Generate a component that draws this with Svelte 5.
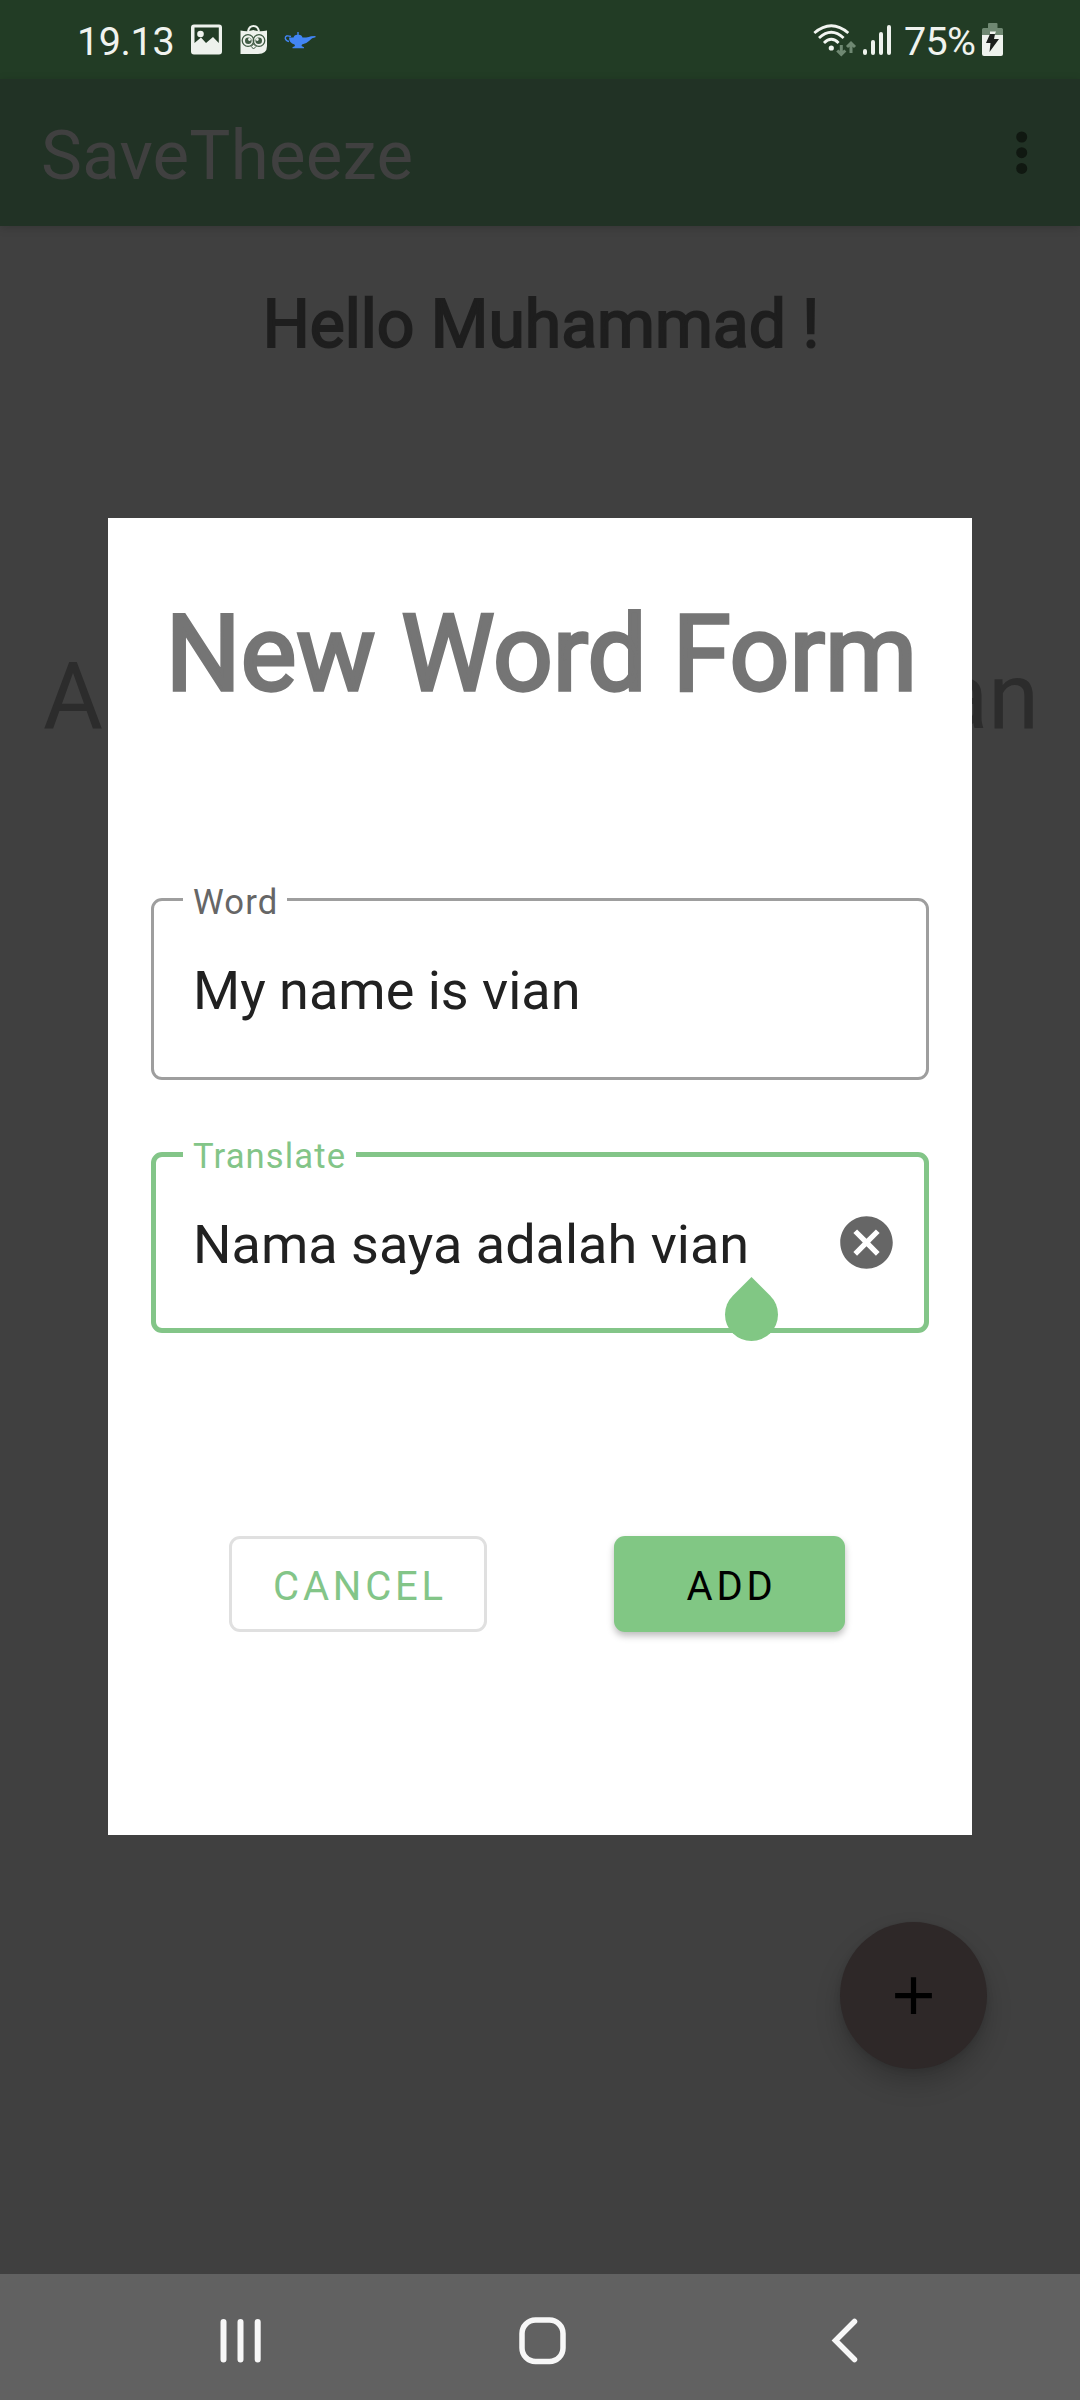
<script>
  const bars = [6, 15, 23, 30];
</script>

<div class="screen">
  <header class="status">
    <div class="left">
      <span class="time">19.13</span>
      <svg class="photo" width="32" height="32" viewBox="0 0 32 32">
        <path fill="#eef2ed" fill-rule="evenodd" d="M3 0.500H28Q31 .5 31 3.500V27.500Q31 30.500 28 30.500H3Q0 30.500 0 27.500V3.500Q0 .5 3 .500ZM3.500 3.500V19L10 13.500L15 19L22 13L27.800 19V3.500Z" />
        <circle cx="9.500" cy="10" r="3.300" fill="#eef2ed" />
      </svg>
      <svg class="bag" width="28" height="32" viewBox="0 0 28 32">
        <path d="M8 7.500Q9 2 13.500 2Q18 2 19 7.500" fill="none" stroke="#eef2ed" stroke-width="2" />
        <path d="M0.500 6.500Q8 8 13.500 6Q19 8 27 6.500V22Q27 30 18 30H.5Z" fill="#eef2ed" />
        <g fill="none" stroke="#3f5a43" stroke-width="1.300">
          <circle cx="8" cy="16.500" r="5.800" /><circle cx="19" cy="16.500" r="5.800" />
        </g>
        <circle cx="8.300" cy="16.700" r="3.300" fill="#3f5a43" /><circle cx="18.700" cy="16.700" r="3.300" fill="#3f5a43" />
        <circle cx="9.500" cy="15.500" r="1.400" fill="#eef2ed" /><circle cx="17.300" cy="15.500" r="1.400" fill="#eef2ed" />
        <path d="M13.500 20L16 22.500L13.500 25L11.300 22.500Z" fill="#eef2ed" stroke="#3f5a43" stroke-width="1" />
      </svg>
      <svg class="lamp" width="32" height="18" viewBox="0 0 32 18">
        <path d="M7 5.500Q1 3.500 1.300 7.500Q2 10 5 10.500" fill="none" stroke="#4285f4" stroke-width="1.400" />
        <path d="M5 6.500H9.500Q10 4 13.300 3.700V1H14.700V3.700Q18 4 18.500 6.500H22Q25 6 27 5.300L31.500 5V6.200Q28 6.500 25 10Q22 13 18 13.500L17.500 15L20 16.200V17.300H8.500V16.200L11 15L10.500 13.500Q5 12 5 6.500Z" fill="#4285f4" />
      </svg>
    </div>
    <div class="right">
      <svg class="wifi" width="44" height="36" viewBox="0 0 44 36">
        <g fill="none" stroke="#f2f5f1" stroke-width="2.800">
          <path d="M1.300 10Q18.300 -4.500 35.300 10" /><path d="M6 15Q18.300 3.500 30.600 15" /><path d="M11 20Q18.300 12.500 25.600 20" />
        </g>
        <circle cx="18.300" cy="25" r="2.600" fill="#f2f5f1" />
        <g fill="none" stroke="#6f8872" stroke-width="3">
          <path d="M28.300 22V31M24.300 27.500L28.300 31.500L32.300 27.500" /><path d="M38 30V20.500M34 24L38 20L42 24" />
        </g>
      </svg>
      <div class="signal">
        {#each bars as h}<i style:height="{h}px"></i>{/each}
      </div>
      <span class="pct">75%</span>
      <svg class="battery" width="22" height="34" viewBox="0 0 22 34">
        <path d="M6 1Q6 0 7 0H14.500Q15.500 0 15.500 1V5H19.500Q21 5 21 6.500V12H0V6.500Q0 5 1.500 5H6Z" fill="#6f8872" />
        <path d="M0 12H21V31Q21 33 19 33H2Q0 33 0 31Z" fill="#eef2ed" />
        <path d="M8 8.500H14L12.500 12H8Z" fill="#eef2ed" />
        <path d="M8 11H13L12 16H17L7.500 29L8.500 20H4Z" fill="#1b1f1c" />
      </svg>
    </div>
  </header>

  <div class="appbar">
    <span class="brand">SaveTheeze</span>
    <svg width="12" height="44" viewBox="0 0 12 44" fill="#101811">
      <circle cx="5.700" cy="6" r="5.500" /><circle cx="5.700" cy="21.700" r="5.500" /><circle cx="5.700" cy="37.400" r="5.500" />
    </svg>
  </div>

  <main>
    <h2>Hello Muhammad !</h2>
    <div class="phrase"><span>A</span><span>an</span></div>
  </main>

  <nav>
    <svg width="1080" height="126" viewBox="0 0 1080 126" fill="none" stroke="#f7f7f7">
      <path d="M223.500 48V85.500M240.500 48V85.500M257.700 48V85.500" stroke-width="6" stroke-linecap="round" />
      <rect x="522" y="46" width="41" height="41.500" rx="13.500" stroke-width="5.500" />
      <path d="M854.500 47.500L835.500 66.500L854.500 85.500" stroke-width="5.500" stroke-linecap="round" />
    </svg>
  </nav>

  <button class="fab" aria-label="Add word">
    <svg width="63" height="63" viewBox="0 0 24 24"><path d="M19 13h-6v6h-2v-6H5v-2h6V5h2v6h6v2z" /></svg>
  </button>

  <section class="dialog">
    <h1>New Word Form</h1>
    <fieldset class="word">
      <legend><span>Word</span></legend>
      <span class="value">My name is vian</span>
    </fieldset>
    <fieldset class="translate">
      <legend><span>Translate</span></legend>
      <span class="value">Nama saya adalah vian</span>
      <svg class="clear" width="63" height="63" viewBox="0 0 24 24" fill="#666"><path d="M12 2C6.470 2 2 6.470 2 12s4.470 10 10 10 10-4.470 10-10S17.530 2 12 2zm5 13.590L15.590 17 12 13.410 8.410 17 7 15.590 10.590 12 7 8.410 8.410 7 12 10.590 15.590 7 17 8.410 13.410 12 17 15.590z" /></svg>
      <div class="handle"></div>
    </fieldset>
    <div class="actions">
      <button class="cancel">CANCEL</button>
      <button class="add">ADD</button>
    </div>
  </section>
</div>

<style>
  :global(body) { margin: 0; }
  * { box-sizing: border-box; }
  .screen {
    position: relative;
    width: 1080px;
    height: 2400px;
    background: #404040;
    display: flex;
    flex-direction: column;
    font-family: Roboto, sans-serif;
    overflow: hidden;
    white-space: nowrap;
  }
  .status {
    flex: 0 0 79px;
    background: #223c25;
    color: #f0f3ef;
    display: flex;
    justify-content: space-between;
    padding: 0 76px 0 77px;
  }
  .left, .right { display: flex; align-items: flex-start; }
  .time, .pct { font-size: 39.500px; line-height: 46px; margin-top: 19px; }
  .time { width: 98px; letter-spacing: -0.400px; }
  .photo { margin: 24px 0 0 16px; }
  .bag { margin: 24px 0 0 17px; }
  .lamp { margin: 31px 0 0 16px; }
  .wifi { margin-top: 23px; }
  .signal { display: flex; align-items: flex-end; gap: 4px; margin: 25px 0 0 6px; height: 30px; }
  .signal i { width: 4px; border-radius: 2px; background: #eef2ed; }
  .pct { margin-left: 13px; width: 74px; letter-spacing: -0.700px; }
  .battery { margin: 23px 0 0 4px; }

  .appbar {
    position: relative;
    flex: 0 0 147px;
    background: #213225;
    box-shadow: 0 2px 9px rgba(0, 0, 0, 0.160);
    display: flex;
    justify-content: space-between;
    align-items: flex-start;
    padding: 0 52px 0 41px;
  }
  .brand { font-size: 69px; line-height: 80px; margin-top: 37px; letter-spacing: 0.200px; color: #404040; }
  .appbar svg { margin-top: 52px; }

  main { flex: 1; }
  h2 {
    margin: 60px 0 0;
    text-align: center;
    font-size: 66px;
    line-height: 78px;
    font-weight: 400;
    color: #1e1e1e;
    -webkit-text-stroke: 2px #1e1e1e;
    text-indent: 2px;
  }
  .phrase {
    display: flex;
    justify-content: space-between;
    margin-top: 279px;
    padding: 0 41px 0 43px;
    font-size: 91.900px;
    line-height: 108px;
    color: #2c2c2c;
  }
  nav { flex: 0 0 126px; background: #616161; }
  nav svg { display: block; }
  button { font-family: inherit; border: 0; padding: 0; }

  .fab {
    position: absolute;
    left: 840px;
    top: 1922px;
    width: 147px;
    height: 147px;
    border-radius: 50%;
    background: #2e2828;
    box-shadow: 0 14px 26px rgba(0, 0, 0, 0.200), 0 2px 6px rgba(0, 0, 0, 0.100);
    display: grid;
    place-items: center;
  }

  .dialog {
    position: absolute;
    left: 108px;
    top: 518px;
    width: 864px;
    height: 1317px;
    background: #fff;
    padding: 75px 43px 0;
  }
  h1 {
    margin: 0;
    text-align: center;
    font-size: 105px;
    line-height: 124px;
    font-weight: 400;
    color: #757575;
    -webkit-text-stroke: 3.300px #757575;
    text-indent: 3px;
  }
  fieldset {
    position: relative;
    display: block;
    min-width: 0;
    margin: 0;
    padding: 0;
    border-style: solid;
    border-radius: 11px;
  }
  legend {
    margin-left: 29px;
    padding: 0 10px;
    height: 3px;
    font-size: 34.650px;
    letter-spacing: 1.100px;
    line-height: 40px;
  }
  legend span { display: block; margin-top: -16px; }
  .word { height: 182px; margin-top: 181px; border-width: 3px; border-color: #9e9e9e; }
  .word legend { color: #666; width: 104px; }
  .translate { height: 181px; margin-top: 72px; border-width: 5px; border-color: #83c588; }
  .translate legend { color: #83c588; width: 173px; margin-left: 27px; height: 5px; }
  .value {
    display: block;
    font-size: 54px;
    line-height: 64px;
    color: #212121;
    margin: 58px 0 0 39px;
  }
  .translate .value { margin: 56px 0 0 37px; }
  .clear { position: absolute; left: 679px; top: 54px; }
  .handle {
    position: absolute;
    left: 569px;
    top: 131px;
    width: 53px;
    height: 53px;
    background: #81c784;
    border-radius: 0 50% 50% 50%;
    transform: rotate(45deg);
  }
  .actions { display: flex; gap: 127px; margin: 203px 0 0 78px; }
  .actions button {
    height: 96px;
    border-radius: 11px;
    font-size: 40px;
    letter-spacing: 3.800px;
    padding: 5px 0 0 4px;
  }
  .actions .cancel { width: 258px; background: #fff; box-shadow: inset 0 0 0 3px #e0e0e0; color: #83c588; }
  .actions .add { width: 231px; background: #81c784; color: #000; box-shadow: 0 4px 7px rgba(0, 0, 0, 0.260); }
</style>
